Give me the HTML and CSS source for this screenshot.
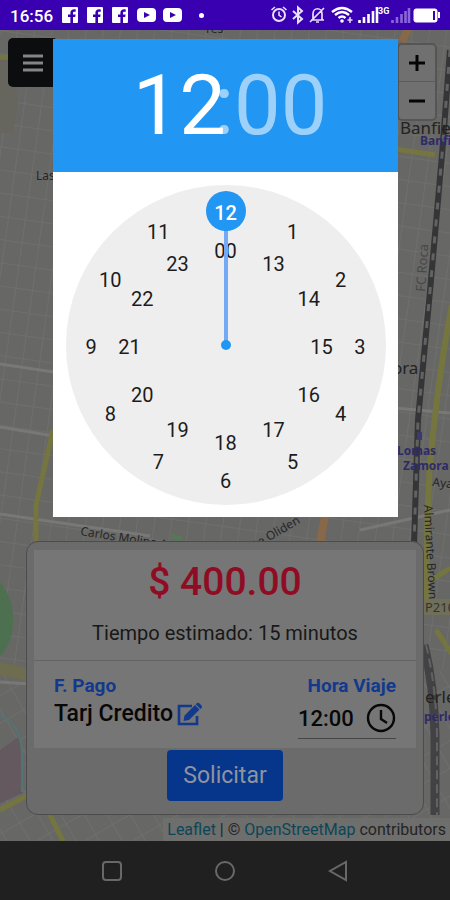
FILE: index.html
```html
<!DOCTYPE html>
<html lang="es">
<head>
    <meta charset="UTF-8">
    <meta name="viewport" content="width=device-width, initial-scale=1.0">
    <title>Solicitar viaje</title>
    <link rel="stylesheet" href="styles.css">
</head>
<body>
    <div class="screen">
        <header class="status-bar">
            <span class="status-time">16:56</span>
            <div class="status-apps">
                <svg width="16" height="16" viewBox="0 0 16 16"><path fill="#fff" d="M1 0h14a1 1 0 0 1 1 1v14a1 1 0 0 1-1 1h-4V10h2.200l.4-2.600H11V6c0-.9.4-1.300 1.300-1.300h1.400V2.400c-3.300-.5-5.300.7-5.300 3.400v1.600H6V10h2.400v6H1a1 1 0 0 1-1-1V1a1 1 0 0 1 1-1z"/></svg>
                <svg width="16" height="16" viewBox="0 0 16 16"><path fill="#fff" d="M1 0h14a1 1 0 0 1 1 1v14a1 1 0 0 1-1 1h-4V10h2.200l.4-2.600H11V6c0-.9.4-1.300 1.300-1.300h1.400V2.400c-3.300-.5-5.300.7-5.300 3.400v1.600H6V10h2.400v6H1a1 1 0 0 1-1-1V1a1 1 0 0 1 1-1z"/></svg>
                <svg width="16" height="16" viewBox="0 0 16 16"><path fill="#fff" d="M1 0h14a1 1 0 0 1 1 1v14a1 1 0 0 1-1 1h-4V10h2.200l.4-2.600H11V6c0-.9.4-1.300 1.300-1.300h1.400V2.400c-3.300-.5-5.300.7-5.300 3.400v1.600H6V10h2.400v6H1a1 1 0 0 1-1-1V1a1 1 0 0 1 1-1z"/></svg>
                <svg width="19" height="14" viewBox="0 0 19 14"><rect width="19" height="14" rx="4" fill="#fff"/><path d="M7 4v6l6-3z" fill="#3800b0"/></svg>
                <svg width="19" height="14" viewBox="0 0 19 14"><rect width="19" height="14" rx="4" fill="#fff"/><path d="M7 4v6l6-3z" fill="#3800b0"/></svg>
            </div>
            <span class="status-dot"></span>
            <svg class="status-icons" width="172" height="20" viewBox="0 0 172 20" fill="none" stroke="#e8e0fa">
                <!-- alarm -->
                <circle cx="9" cy="10" r="6" stroke-width="2"/><path d="M9 6.500V10l2.500 2M1.500 5L5 2M16.500 5L13 2" stroke-width="1.600"/>
                <!-- bluetooth -->
                <path d="M23 6l9 8-4 3.500V2.500L32 6l-9 8" stroke-width="2"/>
                <!-- silent bell -->
                <path d="M41 15h13M43 14V9c0-7 9-7 9 0v6M46 17h3M40 17L54 3" stroke-width="1.700"/>
                <!-- wifi -->
                <path d="M62 7q10-8 20 0M65 10q7-6 14 0M68.500 13q3.500-3 7 0" stroke="#fff" stroke-width="2.400"/><circle cx="72" cy="16" r="1.800" fill="#fff" stroke="none"/><path d="M80 12v6M77.500 15h5" stroke-width="1.500"/>
                <!-- signal -->
                <path d="M89.500 18v-3M94 18v-6M98.500 18V9M103 18V6M107 18V2" stroke="#fff" stroke-width="2.600"/>
                <text class="signal-label" x="108" y="9">3G</text>
                <path d="M122.500 18v-3M127 18v-6M131.500 18V9M135.500 18V6M139 18V3" stroke="#8a66d8" stroke-width="2.600"/>
                <!-- battery -->
                <rect x="144" y="4" width="23" height="13" rx="2" fill="#fff" stroke="#fff"/><path d="M164 6v9" stroke="#3800b0" stroke-width="2"/><path d="M169 7v6" stroke="#fff" stroke-width="2"/>
            </svg>
        </header>

        <main class="map">
            <svg class="map-tiles" viewBox="0 0 450 811" preserveAspectRatio="xMidYMid slice" aria-hidden="true">
                <defs>
                    <pattern id="blocks" width="17" height="23" patternUnits="userSpaceOnUse" patternTransform="rotate(8)">
                        <path d="M0 0H17M0 0V23" fill="none" stroke="#717170" stroke-width="1.500"/>
                    </pattern>
                    <pattern id="blocks-south" width="20" height="24" patternUnits="userSpaceOnUse" patternTransform="rotate(-30)">
                        <path d="M0 0H20M0 0V24" fill="none" stroke="#717170" stroke-width="1.500"/>
                    </pattern>
                </defs>
                <rect width="450" height="811" fill="#676765"/>
                <rect width="450" height="640" fill="url(#blocks)"/>
                <rect y="640" width="450" height="171" fill="url(#blocks-south)"/>
                <!-- parks -->
                <path d="M0 30h10l8 40-5 33H0z" fill="#66665f"/>
                <path d="M0 552q14 16 13 42-2 22-13 32z" fill="#4d7150"/>
                <path d="M172 504l11 2-2 6-10-3z" fill="#587758"/>
                <path d="M0 632l27 6v13l-27-6z" fill="#6e6d50"/>
                <path d="M0 720l20-14 3 57-23 10z" fill="#63595f"/>
                <path d="M0 685q23 10 22 45v32" fill="none" stroke="#527474" stroke-width="2"/>
                <!-- avenues -->
                <g fill="none" stroke="#787877" stroke-width="3">
                    <path d="M0 334l60 9M0 397l60 10M0 484l150 22M0 652l30 2M395 378l55 5M360 500l90-20"/>
                </g>
                <g fill="none" stroke="#75763f" stroke-width="5">
                    <path d="M0 27l56 4M53 400L36 475v40M0 780l30-16M48 781l15 30M395 119l40 6"/>
                    <path d="M432 550l18-12M436 600l20 30"/>
                    <path d="M452 275q-14 70-22 160-4 60-3 150" stroke-width="6"/>
                    <path d="M420 577h32" stroke="#70705a" stroke-width="16"/>
                </g>
                <path d="M326 480l-6 34M402 12l6-13" stroke="#876849" stroke-width="8"/>
                <!-- railway -->
                <path d="M450 20l-8 105-11 125-13 140-4 125" fill="none" stroke="#353537" stroke-width="6"/>
                <path d="M450 20l-8 105-11 125-13 140-4 125" fill="none" stroke="#626262" stroke-width="3" stroke-dasharray="7 10"/>
                <path d="M424 615q10 40 11 90v80" fill="none" stroke="#424244" stroke-width="9"/>
                <path d="M426 615q10 40 11 90v80" fill="none" stroke="#626263" stroke-width="2" stroke-dasharray="9 5"/>
                <rect x="417" y="402" width="5" height="8" fill="#3b3970"/>
                <!-- place names -->
                <text class="place" x="400" y="104">Banfield</text>
                <text class="station" x="420" y="115">Banfield</text>
                <text class="place" x="376" y="344">mora</text>
                <text class="station" x="397" y="425">Lomas</text>
                <text class="station" x="403" y="440">Zamora</text>
                <text class="street" x="432" y="456" transform="rotate(6 432 456)">Ayacucho</text>
                <text class="street" x="36" y="150">Las Heras</text>
                <text class="street faint" transform="translate(425 262) rotate(-86)">FC Roca</text>
                <text class="street" transform="translate(424 475) rotate(87)">Almirante Brown</text>
                <text class="street" x="80" y="505" transform="rotate(9 80 505)">Carlos Molina Arr</text>
                <text class="street" transform="translate(250 522) rotate(-30)">nte Oliden</text>
                <text class="place route" x="425" y="582">P210</text>
                <text class="place" x="425" y="673">erley</text>
                <text class="station" x="424" y="691">perley</text>
                <text class="street" x="206" y="3">res</text>
            </svg>

            <div class="map-controls">
                <button class="menu-button" aria-label="Menu">
                    <svg width="22" height="20" viewBox="0 0 22 20"><path d="M1 3h20M1 10h20M1 17h20" stroke="#858585" stroke-width="3"/></svg>
                </button>
                <div class="zoom">
                    <button aria-label="Acercar"><svg width="16" height="16" viewBox="0 0 16 16"><path d="M0 8h16M8 0v16" stroke="#050505" stroke-width="3"/></svg></button>
                    <button aria-label="Alejar"><svg width="16" height="16" viewBox="0 0 16 16"><path d="M0 8h16" stroke="#050505" stroke-width="3"/></svg></button>
                </div>
            </div>

            <section class="trip-card">
                <div class="trip-info">
                    <div class="trip-summary">
                        <h1>$ 400.00</h1>
                        <p>Tiempo estimado: 15 minutos</p>
                    </div>
                    <div class="trip-options">
                        <div class="option">
                            <h2>F. Pago</h2>
                            <button class="payment">
                                Tarj Credito
                                <svg width="26" height="24" viewBox="0 0 26 24"><path d="M15 4H2v18h18v-8" fill="none" stroke="#12398c" stroke-width="2.600"/><path d="M18 3l4.500 4.500L12 18l-5.500 1L7.500 13.500zM19.500 1.500q1.500-1.500 3 0l2 2q1.200 1.200 0 2.500L23.500 7 18.700 2.300z" fill="#12398c"/></svg>
                            </button>
                        </div>
                        <div class="option option-time">
                            <label for="hora">Hora Viaje</label>
                            <div class="time-field">
                                <input id="hora" type="text" value="12:00">
                                <svg width="30" height="30" viewBox="0 0 30 30" fill="none" stroke="#080808" stroke-width="2.400"><circle cx="15" cy="15" r="13"/><path d="M15 7v9l6 4"/></svg>
                            </div>
                        </div>
                    </div>
                </div>
                <button class="request">Solicitar</button>
            </section>

            <footer class="attribution"><a href="#">Leaflet</a> | © <a href="#">OpenStreetMap</a> contributors</footer>

            <div class="picker" role="dialog" aria-label="Elegir hora">
                <div class="picker-header">
                    <button class="picker-hours">12</button>
                    <span class="picker-colon">:</span>
                    <button class="picker-minutes">00</button>
                </div>
                <div class="picker-body">
                    <div class="dial"></div>
                </div>
            </div>
        </main>

        <nav class="nav-bar">
            <button aria-label="Recientes"><svg width="22" height="22" viewBox="0 0 22 22"><rect x="2" y="2" width="18" height="18" rx="3"/></svg></button>
            <button aria-label="Inicio"><svg width="22" height="22" viewBox="0 0 22 22"><circle cx="11" cy="11" r="9"/></svg></button>
            <button aria-label="Volver"><svg width="22" height="22" viewBox="0 0 22 22"><path d="M19 2v18L3 11z"/></svg></button>
        </nav>
    </div>

    <script>
        const dial = document.querySelector(".dial");

        // radius is a percentage of the dial size
        function addHour(label, step, radius){
            const angle = step * Math.PI / 6;
            const hour = document.createElement("button");
            hour.className = "hour";
            hour.textContent = label;
            hour.style.left = `${Math.round(50 + Math.sin(angle) * radius)}%`;
            hour.style.top = `${Math.round(50 - Math.cos(angle) * radius)}%`;
            if(label === "12"){
                hour.classList.add("selected");
            }
            dial.appendChild(hour);
        }

        for(let i = 1; i <= 12; i++){
            addHour(String(i), i, 42);
            addHour(i === 12 ? "00" : String(i + 12), i, 30);
        }

        const hand = document.createElement("span");
        hand.className = "hand";
        dial.appendChild(hand);
    </script>
</body>
</html>
```
FILE: styles.css
```css
*{
    margin: 0;
    padding: 0;
    box-sizing: border-box;
}

body{
    font-family: Roboto, "Liberation Sans", sans-serif;
    background: #202020;
}

button{
    font-family: inherit;
    border: none;
    background: transparent;
    cursor: pointer;
}

.screen{
    min-height: 100vh;
    display: flex;
    flex-direction: column;
}

/* status bar */
.status-bar{
    height: 30px;
    background: #3800b0;
    color: #fff;
    display: flex;
    align-items: center;
    padding: 0 8px 0 10px;
}

.status-time{
    font-size: 17px;
    font-weight: 500;
    line-height: 30px;
    padding-top: 2px;
}

.status-apps{
    display: flex;
    align-items: center;
    gap: 9px;
    margin-left: 9px;
}

.status-apps svg:nth-child(n+4){
    margin-right: -2px;
}

.status-dot{
    width: 5px;
    height: 5px;
    border-radius: 50%;
    background: #fff;
    margin-left: 19px;
}

.status-icons{
    margin-left: auto;
}

.signal-label{
    font-size: 9px;
    font-weight: 700;
    fill: #fff;
    stroke: none;
}

/* map */
.map{
    flex: 1;
    position: relative;
    display: flex;
    flex-direction: column;
    background: #676765;
}

.map-tiles{
    position: absolute;
    width: 100%;
    height: 100%;
}

.map-tiles text{
    font-family: "Noto Sans", sans-serif;
}

.map-tiles .place{
    font-size: 17px;
    fill: #222;
}

.map-tiles .route{
    font-size: 13px;
    fill: #33332a;
}

.map-tiles .station{
    font-size: 12px;
    font-weight: 700;
    fill: #2e2b68;
}

.map-tiles .street{
    font-size: 12px;
    fill: #262626;
}

.map-tiles .faint{
    font-size: 13px;
    fill: #484848;
}

.map-controls{
    position: relative;
    display: flex;
    justify-content: space-between;
    align-items: flex-start;
    padding: 8px 13px 0 8px;
}

.menu-button{
    width: 50px;
    height: 49px;
    background: #0c0d0e;
    border-radius: 5px;
    display: flex;
    align-items: center;
    justify-content: center;
}

.zoom{
    width: 40px;
    margin-top: 5px;
    border: 2px solid #555;
    border-radius: 5px;
    background: #707070;
}

.zoom button{
    width: 100%;
    height: 37px;
    display: flex;
    align-items: center;
    justify-content: center;
}

.zoom button:first-child{
    border-bottom: 1px solid #5c5c5c;
}

/* trip card */
.trip-card{
    position: relative;
    margin: auto 26px 0;
    padding: 8px 7px 13px;
    background: #6b6b6b;
    border: 1px solid #4c4c4c;
    border-radius: 12px;
    text-align: center;
}

.trip-info{
    background: #767676;
}

.trip-summary{
    height: 111px;
    border-bottom: 1px solid #646464;
}

.trip-summary h1{
    font-size: 39px;
    font-weight: 500;
    line-height: 48px;
    padding-top: 8px;
    color: #8f0d24;
}

.trip-summary p{
    font-size: 20px;
    line-height: 24px;
    margin-top: 15px;
    color: #181818;
}

.trip-options{
    display: flex;
    justify-content: space-between;
    padding: 13px 20px 9px;
}

.option{
    display: flex;
    flex-direction: column;
    align-items: flex-start;
}

.option-time{
    align-items: flex-end;
}

.option h2,
.option label{
    font-size: 19px;
    font-weight: 700;
    line-height: 24px;
    color: #12398c;
}

.payment{
    display: flex;
    align-items: center;
    gap: 4px;
    font-size: 23px;
    font-weight: 500;
    line-height: 32px;
    color: #080808;
}

.time-field{
    width: 98px;
    height: 41px;
    display: flex;
    align-items: center;
    justify-content: space-between;
    border-bottom: 1px solid #454545;
}

.time-field input{
    width: 64px;
    border: none;
    outline: none;
    background: transparent;
    font-family: inherit;
    font-size: 22px;
    font-weight: 500;
    color: #080808;
}

.request{
    height: 51px;
    margin-top: 2px;
    padding: 0 16px;
    background: #06368c;
    color: #8f949c;
    font-size: 23px;
    border-radius: 4px;
    vertical-align: top;
}

.attribution{
    position: relative;
    align-self: flex-end;
    margin-top: 3px;
    padding: 0 4px;
    background: #6e6e6d;
    color: #242424;
    font-size: 16px;
    line-height: 23px;
}

.attribution a{
    color: #0c4656;
    text-decoration: none;
}

/* time picker */
.picker{
    position: absolute;
    top: 9px;
    left: 53px;
    right: 52px;
    background: #fff;
}

.picker-header{
    height: 133px;
    padding-left: 9px;
    background: #2196f3;
    color: #fff;
    display: flex;
    align-items: center;
    justify-content: center;
}

.picker-header button,
.picker-colon{
    font-size: 83px;
    line-height: 100px;
    color: #fff;
}

.picker-header .picker-hours{
    margin-right: -12px;
}

.picker-header .picker-minutes,
.picker-colon{
    color: rgba(255,255,255,.56);
}

.picker-body{
    padding: 13px 12px 12px;
}

.dial{
    position: relative;
    width: 100%;
    max-width: 320px;
    aspect-ratio: 1;
    margin: 0 auto;
    border-radius: 50%;
    background: #eee;
}

.hour{
    position: absolute;
    width: 40px;
    height: 40px;
    margin: -20px 0 0 -20px;
    padding-top: 4px;
    border-radius: 50%;
    font-size: 20px;
    color: #1c1c1c;
}

.hour.selected{
    background: #2196f3;
    color: #fff;
    font-weight: 500;
}

/* from the dial centre up to the selected hour */
.hand{
    position: absolute;
    left: 50%;
    top: 14%;
    width: 4px;
    height: 36%;
    margin-left: -2px;
    background: #74aaf5;
}

.hand::after{
    content: "";
    position: absolute;
    left: -3px;
    bottom: -5px;
    width: 10px;
    height: 10px;
    border-radius: 50%;
    background: #2196f3;
}

/* the hand starts at the rim of the selected hour */
.hour.selected{
    z-index: 1;
}

/* system navigation */
.nav-bar{
    height: 59px;
    background: #202020;
    display: flex;
    align-items: center;
    justify-content: center;
    gap: 69px;
}

.nav-bar button{
    width: 44px;
    height: 44px;
}

.nav-bar svg{
    fill: none;
    stroke: #686868;
    stroke-width: 2;
    vertical-align: middle;
}
```
